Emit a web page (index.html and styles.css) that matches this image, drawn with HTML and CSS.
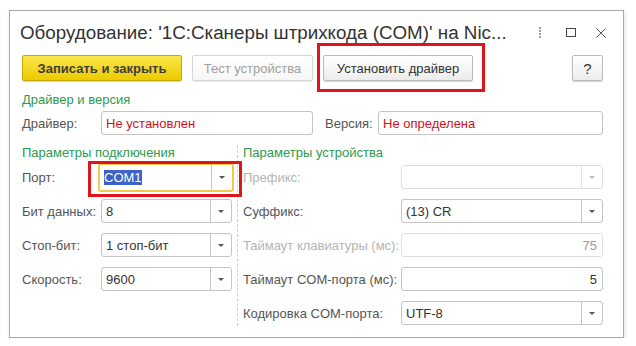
FILE: index.html
```html
<!DOCTYPE html>
<html lang="ru">
<head>
<meta charset="utf-8">
<link rel="stylesheet" href="styles.css">
</head>
<body>
<div class="window">
  <div class="titlebar">
    <span class="title">Оборудование: '1С:Сканеры штрихкода (COM)' на Nic...</span>
    <div class="controls">
      <span class="dots"><i></i><i></i><i></i><i></i></span>
      <span class="maximize"></span>
      <svg class="close" width="10" height="10" viewBox="0 0 10 10"><path d="M0.5 0.5 L9.5 9.5 M9.5 0.5 L0.5 9.5" stroke="#555" stroke-width="1" fill="none"/></svg>
    </div>
  </div>
  <div class="toolbar">
    <button class="btn btn-default">Записать и закрыть</button>
    <button class="btn btn-disabled">Тест устройства</button>
    <button class="btn btn-install">Установить драйвер</button>
    <span class="spacer"></span>
    <button class="btn btn-help">?</button>
    <span class="mark mark-install"></span>
  </div>

  <div class="group-title">Драйвер и версия</div>
  <div class="driver-row">
    <span class="label">Драйвер:</span>
    <div class="field field-driver"><span class="val red">Не установлен</span></div>
    <span class="label label-version">Версия:</span>
    <div class="field field-version"><span class="val red">Не определена</span></div>
  </div>

  <div class="columns">
    <div class="col col-left">
      <div class="group-title">Параметры подключения</div>
      <div class="rows">
        <span class="label">Порт:</span>
        <div class="field combo focused"><span class="val"><span class="sel">COM1</span></span><span class="drop"><i></i></span><span class="mark mark-port"></span></div>
        <span class="label">Бит данных:</span>
        <div class="field combo"><span class="val">8</span><span class="drop"><i></i></span></div>
        <span class="label">Стоп-бит:</span>
        <div class="field combo"><span class="val">1 стоп-бит</span><span class="drop"><i></i></span></div>
        <span class="label">Скорость:</span>
        <div class="field combo"><span class="val">9600</span><span class="drop"><i></i></span></div>
      </div>
    </div>
    <div class="col col-right">
      <div class="group-title">Параметры устройства</div>
      <div class="rows">
        <span class="label disabled">Префикс:</span>
        <div class="field combo disabled"><span class="val"></span><span class="drop"><i></i></span></div>
        <span class="label">Суффикс:</span>
        <div class="field combo"><span class="val">(13) CR</span><span class="drop"><i></i></span></div>
        <span class="label disabled">Таймаут клавиатуры (мс):</span>
        <div class="field disabled num"><span class="val">75</span></div>
        <span class="label">Таймаут COM-порта (мс):</span>
        <div class="field num"><span class="val">5</span></div>
        <span class="label">Кодировка COM-порта:</span>
        <div class="field combo"><span class="val">UTF-8</span><span class="drop"><i></i></span></div>
      </div>
    </div>
  </div>
</div>
</body>
</html>
```

FILE: styles.css
```css
* { box-sizing: border-box; }
html, body { margin: 0; padding: 0; background: #fff; }
body {
  font-family: "Liberation Sans", Arial, sans-serif;
  font-size: 13px;
  color: #4a4a4a;
  padding: 10px 0 0 9px;
}
.window {
  position: relative;
  width: 615px;
  height: 328px;
  border: 1px solid #a9a9a9;
  background: #fff;
  box-shadow: 1px 2px 4px rgba(0,0,0,0.12);
  padding: 0 20px 0 12px;
}
.titlebar {
  height: 43px;
  display: flex;
  align-items: center;
  justify-content: space-between;
}
.title {
  font-size: 18.8px;
  color: #333;
  white-space: nowrap;
  margin-left: -2px;
  margin-top: 1px;
}
.controls {
  display: flex;
  align-items: center;
  margin-right: -3px;
}
.dots {
  display: flex;
  flex-direction: column;
  gap: 1px;
  margin-right: 25px;
}
.dots i {
  display: block;
  width: 2px;
  height: 2px;
  background: #a0a0a0;
}
.maximize {
  width: 10px;
  height: 9px;
  border: 1px solid #444;
  margin-right: 20px;
}
.close { display: block; }

.toolbar {
  position: relative;
  display: flex;
  align-items: center;
  height: 26px;
  gap: 10px;
  margin-top: 1px;
}
.btn {
  height: 26px;
  font-family: "Liberation Sans", Arial, sans-serif;
  font-size: 13px;
  border-radius: 2px;
  border: 1px solid #bcbcbc;
  background: linear-gradient(#ffffff, #ececec);
  color: #333;
  padding: 0;
  white-space: nowrap;
  box-shadow: 0 1px 1px rgba(0,0,0,0.18);
}
.btn-default {
  width: 160px;
  background: linear-gradient(#fbe64c, #eccb00);
  border-color: #c8a800;
  font-weight: bold;
  color: #3d3d3d;
}
.btn-disabled {
  width: 121px;
  color: #a0a0a0;
  border-color: #d4d4d4;
  background: linear-gradient(#fff, #f6f6f6);
  box-shadow: 0 1px 1px rgba(0,0,0,0.08);
}
.btn-install { width: 150px; }
.spacer { flex: 1; }
.btn-help { width: 31px; font-size: 15px; }

.mark {
  position: absolute;
  border: 3px solid #e0141b;
  pointer-events: none;
}
.mark-install {
  left: 295px;
  top: -12px;
  width: 168px;
  height: 49px;
}
.mark-port {
  left: -12px;
  top: -4px;
  width: 154px;
  height: 36px;
}

.group-title {
  color: #2c9a52;
  font-size: 13px;
  line-height: 16px;
}
.toolbar + .group-title { margin-top: 11px; }

.driver-row {
  display: flex;
  align-items: center;
  margin-top: 3px;
  height: 24px;
}
.driver-row .label { width: 79px; flex: none; }
.field {
  position: relative;
  height: 24px;
  border: 1px solid #c4c4c4;
  border-radius: 3px;
  background: #fff;
  display: flex;
  align-items: center;
  color: #333;
  font-size: 13px;
}
.field .val {
  flex: 1;
  padding: 0 4px;
  white-space: nowrap;
  overflow: hidden;
}
.red { color: #d0121b; }
.field-driver { width: 212px; flex: none; }
.driver-row .label-version { width: 53px; margin-left: 12px; }
.field-version { width: 225px; flex: none; }

.columns {
  display: flex;
  margin-top: 10px;
}
.col-left {
  width: 215px;
}
.col-right {
  flex: 1;
  border-left: 1px dashed #cfcfcf;
  padding-left: 5px;
  padding-bottom: 1px;
}
.rows {
  display: grid;
  align-items: center;
  row-gap: 10px;
  grid-auto-rows: 24px;
  margin-top: 4px;
}
.col-left .rows { grid-template-columns: 79px 131px; }
.col-right .rows { grid-template-columns: 158px 202px; }
.label { color: #555; white-space: nowrap; }
.label.disabled { color: #b4b4b4; }
.field.disabled { border-color: #dedede; color: #9a9a9a; }
.field.num .val { text-align: right; padding-right: 5px; }

.combo .drop {
  width: 21px;
  height: 100%;
  border-left: 1px solid #c4c4c4;
  display: flex;
  align-items: center;
  justify-content: center;
}
.combo.disabled .drop { border-left-color: #e2e2e2; }
.combo .drop i {
  display: block;
  width: 0;
  height: 0;
  border-left: 3px solid transparent;
  border-right: 3px solid transparent;
  border-top: 3px solid #555;
}
.combo.disabled .drop i { border-top-color: #bbb; }

.focused {
  border: 2px solid #f2c94c;
  margin: -2px -2px -2px -3px;
  height: 29px;
}
.sel {
  background: #3d63c6;
  color: #fff;
  padding: 1px 0;
}
```
